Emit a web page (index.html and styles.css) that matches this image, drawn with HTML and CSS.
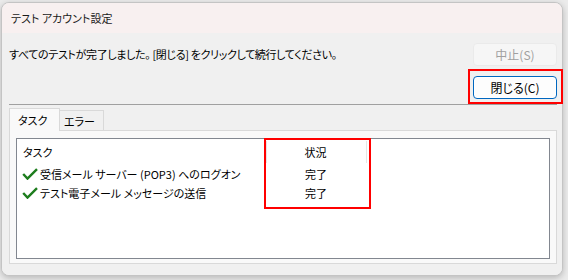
FILE: index.html
```html
<!DOCTYPE html>
<html lang="ja">
<head>
<meta charset="utf-8">
<title>テスト アカウント設定</title>
<link rel="stylesheet" href="styles.css">
</head>
<body>
<div class="window">
  <div class="titlebar">テスト アカウント設定</div>
  <div class="content">
    <div class="toprow">
      <div class="message">すべてのテストが完了しました。 [閉じる] をクリックして続行してください。</div>
      <div class="buttons">
        <button class="btn btn-disabled" disabled>中止(S)</button>
        <button class="btn btn-default">閉じる(C)</button>
      </div>
    </div>
    <div class="separator"></div>
    <div class="tabs">
      <div class="tab tab-active">タスク</div>
      <div class="tab">エラー</div>
    </div>
    <div class="panel">
      <div class="listbox">
        <div class="row header">
          <div class="col-task">タスク</div>
          <div class="col-status">状況</div>
        </div>
        <div class="row item">
          <div class="col-task"><svg class="check" width="16" height="12" viewBox="0 0 16 12"><polyline points="1.2,6 5.5,10.6 15,1.2" fill="none" stroke="#1e7d1e" stroke-width="2.4" stroke-linejoin="miter"/></svg>受信メール サーバー (POP3) へのログオン</div>
          <div class="col-status">完了</div>
        </div>
        <div class="row item">
          <div class="col-task"><svg class="check" width="16" height="12" viewBox="0 0 16 12"><polyline points="1.2,6 5.5,10.6 15,1.2" fill="none" stroke="#1e7d1e" stroke-width="2.4" stroke-linejoin="miter"/></svg>テスト電子メール メッセージの送信</div>
          <div class="col-status">完了</div>
        </div>
      </div>
    </div>
  </div>
</div>
<div class="under">
  <span class="under-left">メール サーバーのリストを確認</span>
  <span class="under-right"><span class="cb"></span>新しい Outlook で</span>
</div>
<div class="mark mark-close"></div>
<div class="mark mark-status"></div>
</body>
</html>
```
FILE: styles.css
```css
html, body {
  margin: 0;
  padding: 0;
}
body {
  width: 568px;
  height: 280px;
  overflow: hidden;
  position: relative;
  background: #ebebeb;
  font-family: "Noto Sans CJK JP", "Noto Sans", sans-serif;
  font-size: 11px;
  font-feature-settings: "palt";
  color: #000;
}
.window {
  margin: 2px 0 0 1px;
  width: 562px;
  box-sizing: border-box;
  border: 1px solid #c4c4c4;
  border-radius: 8px;
  overflow: hidden;
  box-shadow: 0 2px 6px rgba(0, 0, 0, 0.22);
  background: #f0f0f0;
}
.titlebar {
  height: 30px;
  display: flex;
  align-items: center;
  padding-left: 9px;
  background: #f8f0f0;
  font-size: 11px;
  color: #1a1a1a;
}
.content {
  background: #f0f0f0;
  padding: 10px 5px 11px 7px;
}
.toprow {
  display: flex;
  justify-content: space-between;
  align-items: flex-start;
}
.message {
  line-height: 20px;
  padding-top: 1px;
  letter-spacing: -0.35px;
}
.buttons {
  display: flex;
  flex-direction: column;
  gap: 10px;
  width: 84px;
}
.btn {
  height: 23px;
  box-sizing: border-box;
  border-radius: 4px;
  font-family: inherit;
  font-size: 12px;
  font-feature-settings: "palt";
  padding: 0;
  line-height: 20px;
}
.btn-disabled {
  background: #f6f6f6;
  border: 1px solid #eaeaea;
  color: #a0a0a0;
}
.btn-default {
  background: #fdfdfd;
  border: 1px solid #0067c0;
  box-shadow: inset 0 0 0 1px #ffffff;
  color: #000;
}
.separator {
  margin-top: 5px;
  height: 1px;
  background: #a0a0a0;
}
.tabs {
  margin-top: 3px;
  height: 22px;
  display: flex;
  align-items: flex-end;
}
.tab {
  box-sizing: border-box;
  height: 20px;
  width: 44px;
  border: 1px solid #d9d9d9;
  border-bottom: none;
  border-left: none;
  background: #f0f0f0;
  display: flex;
  align-items: center;
  padding-left: 4px;
}
.tab-active {
  height: 23px;
  width: 51px;
  margin-bottom: -1px;
  border-left: 1px solid #d9d9d9;
  background: #f9f9f9;
  padding-left: 8px;
  position: relative;
  z-index: 1;
}
.panel {
  height: 134px;
  box-sizing: border-box;
  border: 1px solid #d9d9d9;
  background: #f9f9f9;
  padding: 7px 6px 4px 6px;
}
.listbox {
  height: 100%;
  box-sizing: border-box;
  border: 1px solid #828790;
  background: #ffffff;
}
.row {
  display: flex;
  height: 19px;
  align-items: center;
}
.row.header {
  height: 25px;
}
.col-task {
  width: 250px;
  box-sizing: border-box;
  display: flex;
  align-items: center;
  white-space: nowrap;
}
.col-status {
  width: 100px;
  text-align: center;
  padding-right: 2px;
  box-sizing: border-box;
}
.header .col-task {
  padding-left: 6px;
  height: 22px;
  border-right: 1px solid #e5e5e5;
}
.header .col-status {
  height: 22px;
  line-height: 22px;
  border-right: 1px solid #e5e5e5;
}
.item .col-task {
  padding-left: 5px;
}
.check {
  margin-right: 2px;
  flex: none;
}
.under {
  margin-top: 2px;
  display: flex;
  font-size: 12px;
  line-height: 16px;
  color: #222;
}
.under-left {
  padding-left: 14px;
  width: 389px;
}
.under-right {
  display: flex;
  align-items: center;
  gap: 4px;
}
.cb {
  width: 11px;
  height: 11px;
  background: #0067c0;
  border-radius: 2px;
}
.mark {
  position: absolute;
  box-sizing: border-box;
  border: 2px solid #ff0000;
}
.mark-close {
  left: 468px;
  top: 69px;
  width: 95px;
  height: 35px;
}
.mark-status {
  left: 264px;
  top: 138px;
  width: 107px;
  height: 71px;
}
```
